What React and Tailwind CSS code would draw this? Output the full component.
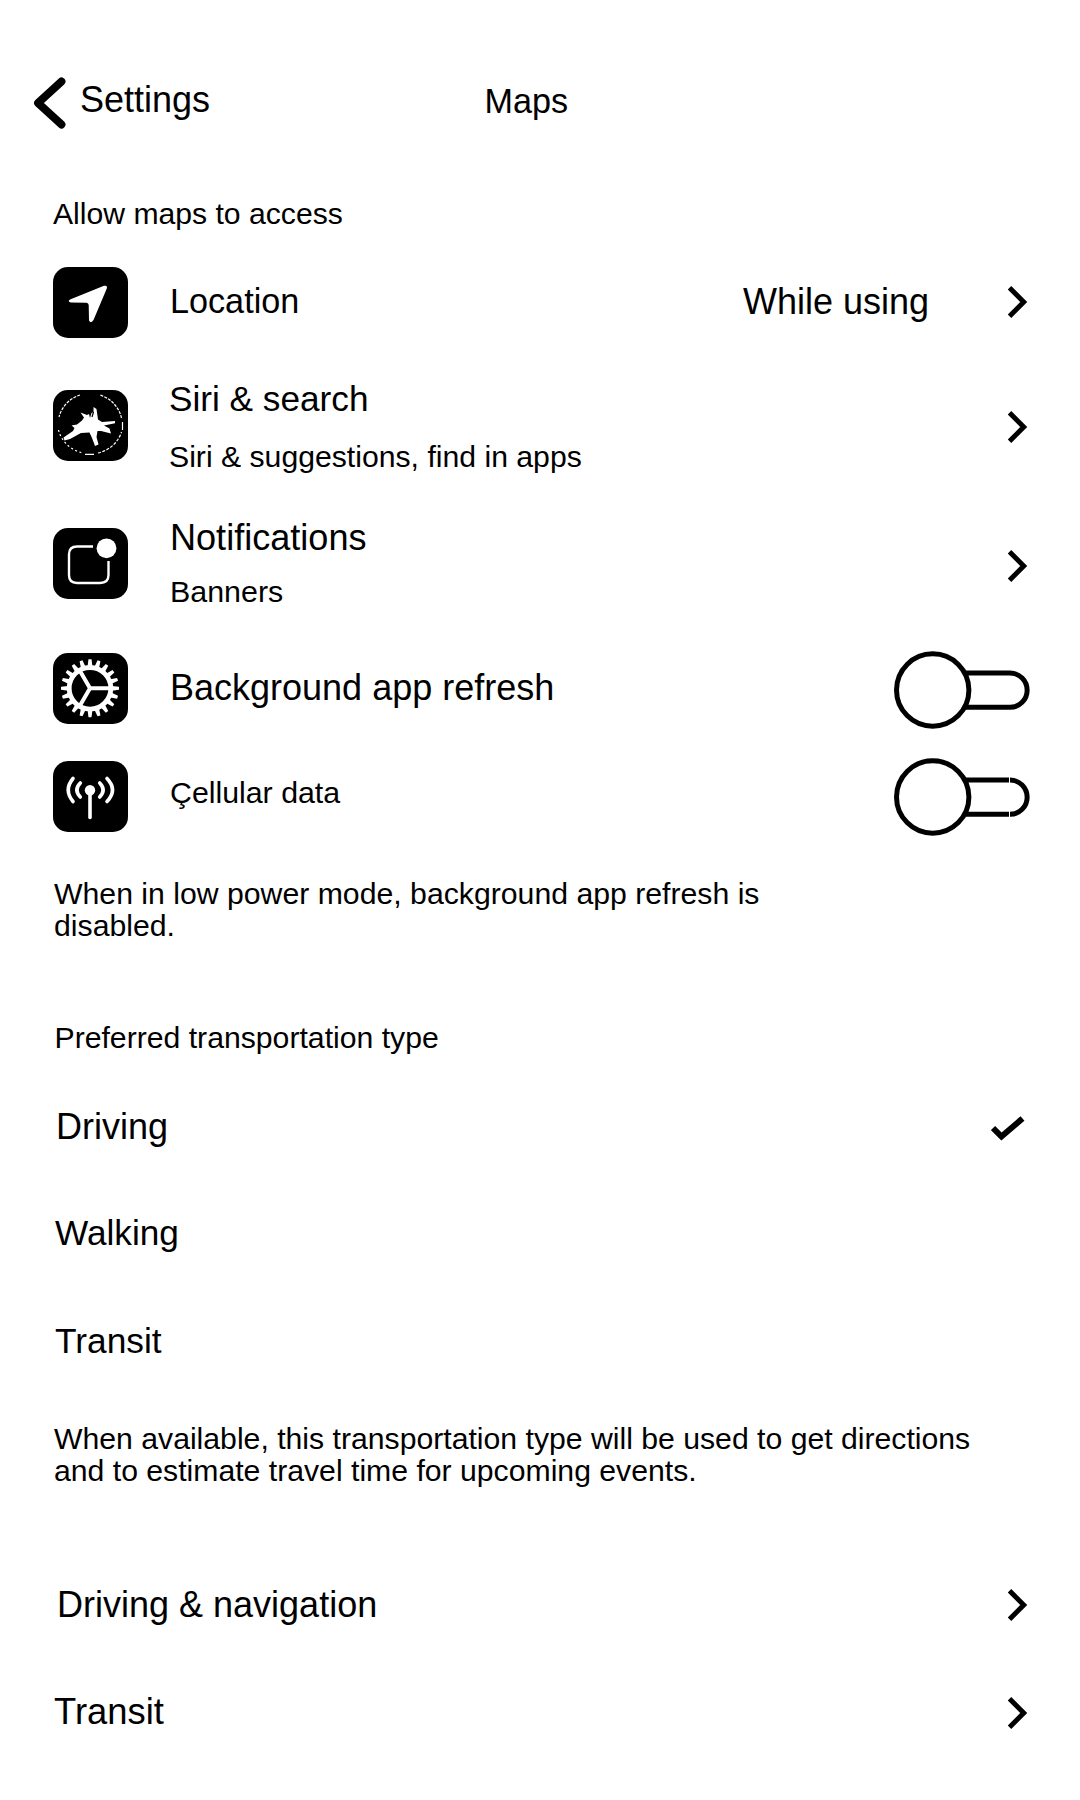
const FONT = 'font-["Liberation_Sans",Arial,sans-serif]';

function Tile({ children, className = '' }) {
  return (
    <div className={`h-[70.5px] w-[75px] shrink-0 overflow-hidden rounded-[15px] bg-black ${className}`}>
      <svg width="75" height="70" viewBox="0 0 75 70">{children}</svg>
    </div>
  );
}

function LocationIcon() {
  return <path d="M17 32.500 L51 18.800 Q54.800 18 53.800 21.500 L40.500 53 Q38 57 36 53.500 L35.700 38 Q35.500 36 33.500 35.800 L18 35.500 Q14 34.500 17 32.500Z" fill="white" />;
}

function SiriIcon() {
  return (
    <>
      <g fill="none" stroke="white" strokeWidth="1.200">
        <path d="M27 5 A32 31 0 0 0 6 27" strokeDasharray="3 1.200" />
        <path d="M5.500 40 A32 31 0 0 0 30 63" strokeDasharray="2 2.500" />
        <path d="M32 64.300 H41" />
        <path d="M45 63 A32 31 0 0 0 68.500 42" strokeDasharray="3 1.500" />
        <path d="M69.500 40 V32" />
        <path d="M68.500 28 A32 31 0 0 0 47 5" strokeDasharray="3 1.200" />
      </g>
      <path d="M40.500 17 L43.500 19 L45 29.500 L49 32 L62 31 V33.300 L51 35.500 L56.500 38.500 L58 43.500 L48 41 L44.500 41 L43.500 47 L45.500 54.500 L42 56 L39 48 L36.500 42.500 L28 43 L17 49 L11.500 50.500 L10.500 47.500 L20 41 L21.500 38 L18.500 35.500 L24 34.500 L29 30.500 L31 27.500 L27.500 22.500 L34 25 L36 24 L37 28 L38.500 23 L40.500 22Z" fill="white" />
      <path d="M40.500 22 L39 27" stroke="black" strokeWidth="1.200" />
    </>
  );
}

function NotificationIcon() {
  return (
    <>
      <path d="M40 18.500 H24 Q16 18.500 16 26.500 V47 Q16 55 24 55 H47 Q55.500 55 55.500 47 V33" fill="none" stroke="white" strokeWidth="2.400" />
      <circle cx="53.500" cy="20.300" r="9.900" fill="white" />
    </>
  );
}

const TEETH = Array.from({ length: 20 }, (_, i) => i * 18);

function GearIcon() {
  return (
    <g fill="none" stroke="white">
      <circle cx="37" cy="35.300" r="20.800" strokeWidth="4.800" />
      {TEETH.map((a) => (
        <path key={a} d="M59 32.900 L66 33.800 V36.800 L59 37.700Z" fill="white" stroke="none" transform={`rotate(${a} 37 35.3)`} />
      ))}
      <path d="M37 35.300 H58 M37 35.300 L27 18 M37 35.300 L27 52.600" strokeWidth="4" />
    </g>
  );
}

function CellularIcon() {
  return (
    <g fill="none" stroke="white" strokeWidth="3.600" strokeLinecap="round">
      <circle cx="37" cy="29.300" r="5.200" fill="white" stroke="none" />
      <path d="M37 31 V56.500" />
      <path d="M27.300 22 Q20.500 29 27.300 36 M46.700 22 Q53.500 29 46.700 36" />
      <path d="M20 17.500 Q10.500 29 20 40.500 M54 17.500 Q65 29 54 40.500" />
    </g>
  );
}

function Chevron({ className }) {
  return (
    <svg className={`shrink-0 ${className}`} width="20" height="32" viewBox="0 0 20 32">
      <path d="M1.500 1.800 L15.700 16 L1.500 30.200" fill="none" stroke="black" strokeWidth="5" />
    </svg>
  );
}

function Toggle({ split, className }) {
  return (
    <svg className={`shrink-0 ${className}`} width="136" height="78" viewBox="0 0 136 78">
      <path d="M72 22 H116 A17 17 0 0 1 116 56.300 H72" fill="none" stroke="black" strokeWidth="5" />
      {split && <path d="M115.500 18 V60" stroke="white" strokeWidth="1" />}
      <circle cx="38.700" cy="39" r="36.200" fill="white" stroke="black" strokeWidth="5" />
    </svg>
  );
}

export default function App() {
  return (
    <div className={`flex h-[1800px] w-[1080px] flex-col overflow-hidden bg-white text-black ${FONT} whitespace-nowrap`}>
      <header className="flex h-[180px] items-start">
        <svg className="ml-[33px] mt-[76px]" width="34" height="53" viewBox="0 0 34 53">
          <path d="M28.500 5.500 L5 27 L28.500 48.500" fill="none" stroke="black" strokeWidth="7.800" strokeLinecap="round" strokeLinejoin="round" />
        </svg>
        <div className="ml-[13px] mt-[80px] w-[404.5px] text-[36px] leading-[40px]">Settings</div>
        <h1 className="mt-[81px] text-[34.2px] leading-[40px]">Maps</h1>
      </header>
      <h2 className="ml-[53px] h-[80px] pt-[18px] text-[30.15px] leading-[32px]">Allow maps to access</h2>

      <section className="ml-[53px] flex w-[980px] flex-col">
        <div className="flex h-[110px] items-start">
          <Tile className="mt-[7px]"><LocationIcon /></Tile>
          <div className="ml-[42px] mt-[21px] grow text-[34.2px] leading-[40px]">Location</div>
          <div className="mt-[22px] text-[36px] leading-[40px]">While using</div>
          <Chevron className="ml-[79px] mr-[5px] mt-[26px]" />
        </div>
        <div className="flex h-[140px] items-start">
          <Tile className="mt-[20px]"><SiriIcon /></Tile>
          <div className="ml-[41px] mt-[9px] grow">
            <div className="text-[35.2px] leading-[40px]">Siri &amp; search</div>
            <div className="mt-[22px] text-[30.2px] leading-[32px]">Siri &amp; suggestions, find in apps</div>
          </div>
          <Chevron className="mr-[5px] mt-[41px]" />
        </div>
        <div className="flex h-[135px] items-start">
          <Tile className="mt-[18px]"><NotificationIcon /></Tile>
          <div className="ml-[42px] mt-[8px] grow">
            <div className="text-[36.1px] leading-[40px]">Notifications</div>
            <div className="mt-[17px] text-[30.4px] leading-[32px]">Banners</div>
          </div>
          <Chevron className="mr-[5px] mt-[40px]" />
        </div>
        <div className="flex h-[105px] items-start">
          <Tile className="mt-[8px]"><GearIcon /></Tile>
          <div className="ml-[42px] mt-[23px] grow text-[36px] leading-[40px]">Background app refresh</div>
          <Toggle className="mr-[3px] mt-[5.5px]" />
        </div>
        <div className="flex h-[110px] items-start">
          <Tile className="mt-[11px]"><CellularIcon /></Tile>
          <div className="ml-[42px] mt-[27px] grow text-[30.3px] leading-[32px]">Çellular data</div>
          <Toggle split className="mr-[3px] mt-[7.5px]" />
        </div>
      </section>

      <p className="ml-[54px] h-[140px] pt-[18px] text-[30.22px] leading-[32px]">
        When in low power mode, background app refresh is<br />disabled.
      </p>

      <h2 className="ml-[54.5px] h-[80px] pt-[22px] text-[30.2px] leading-[32px]">Preferred transportation type</h2>
      <section className="ml-[55px] flex w-[979px] flex-col">
        <div className="flex h-[110px] items-start">
          <div className="ml-px mt-[27px] grow text-[36px] leading-[40px]">Driving</div>
          <svg className="mr-[9px] mt-[36px]" width="34" height="26" viewBox="0 0 34 26">
            <path d="M2 12 L10.500 20.500 L31.500 2.500" fill="none" stroke="black" strokeWidth="6" />
          </svg>
        </div>
        <div className="h-[110px] pt-[23px] text-[35.2px] leading-[40px]">Walking</div>
        <div className="h-[100px] pt-[21px] text-[35.3px] leading-[40px]">Transit</div>
      </section>
      <p className="ml-[54px] h-[160px] pt-[23px] text-[30.2px] leading-[32px]">
        When available, this transportation type will be used to get directions<br />and to estimate travel time for upcoming events.
      </p>
      <section className="ml-[54px] flex w-[979px] flex-col">
        <div className="flex h-[110px] items-start">
          <div className="ml-[3px] mt-[25px] grow text-[36px] leading-[40px]">Driving &amp; navigation</div>
          <Chevron className="mr-[5px] mt-[29px]" />
        </div>
        <div className="flex h-[110px] items-start">
          <div className="mt-[22px] grow text-[36.4px] leading-[40px]">Transit</div>
          <Chevron className="mr-[5px] mt-[27px]" />
        </div>
      </section>
    </div>
  );
}
